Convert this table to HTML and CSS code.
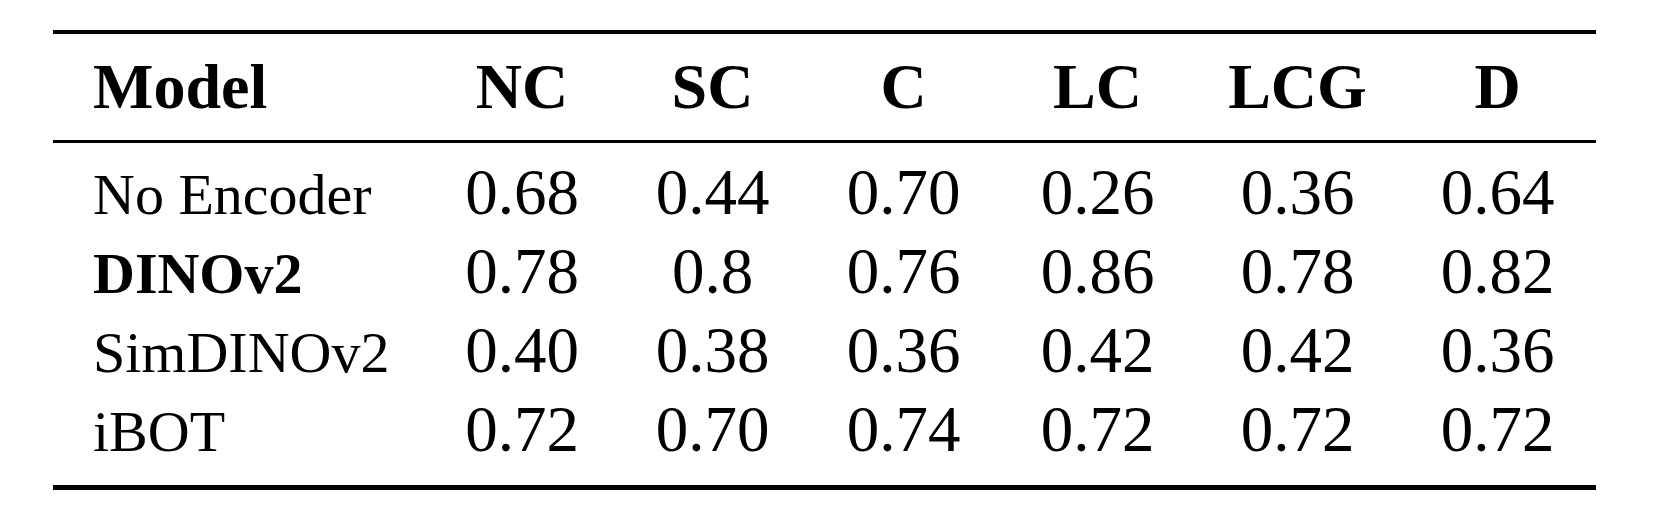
FILE: index.html
```html
<!DOCTYPE html>
<html lang="en">
<head>
<meta charset="utf-8">
<title>Model comparison</title>
<link rel="stylesheet" href="styles.css">
</head>
<body>
<table class="results">
  <colgroup>
    <col class="c-model">
    <col class="c-nc">
    <col class="c-sc">
    <col class="c-c">
    <col class="c-lc">
    <col class="c-lcg">
    <col class="c-d">
  </colgroup>
  <thead>
    <tr>
      <th class="label">Model</th>
      <th>NC</th>
      <th>SC</th>
      <th>C</th>
      <th>LC</th>
      <th>LCG</th>
      <th>D</th>
    </tr>
  </thead>
  <tbody>
    <tr class="first">
      <td class="label">No Encoder</td>
      <td>0.68</td><td>0.44</td><td>0.70</td><td>0.26</td><td>0.36</td><td>0.64</td>
    </tr>
    <tr>
      <td class="label strong">DINOv2</td>
      <td>0.78</td><td>0.8</td><td>0.76</td><td>0.86</td><td>0.78</td><td>0.82</td>
    </tr>
    <tr>
      <td class="label">SimDINOv2</td>
      <td>0.40</td><td>0.38</td><td>0.36</td><td>0.42</td><td>0.42</td><td>0.36</td>
    </tr>
    <tr class="last">
      <td class="label">iBOT</td>
      <td>0.72</td><td>0.70</td><td>0.74</td><td>0.72</td><td>0.72</td><td>0.72</td>
    </tr>
  </tbody>
</table>
</body>
</html>
```
FILE: styles.css
```css
html, body {
  margin: 0;
  padding: 0;
  background: #ffffff;
}

body {
  padding: 30px 0 0 53px;
  font-family: "Liberation Serif", "Times New Roman", serif;
  color: #000000;
}

.results {
  border-collapse: separate;
  border-spacing: 0;
  width: 1543px;
  table-layout: fixed;
}

.c-model { width: 374px; }
.c-nc { width: 190px; }
.c-sc { width: 191px; }
.c-c { width: 191px; }
.c-lc { width: 197px; }
.c-lcg { width: 203px; }
.c-d { width: 197px; }

.results th,
.results td {
  padding: 0;
  text-align: center;
  white-space: nowrap;
  vertical-align: baseline;
}

.results th {
  font-size: 64px;
  line-height: 78px;
  font-weight: bold;
  border-top: 4px solid #000;
  border-bottom: 3px solid #000;
  padding-top: 14px;
  padding-bottom: 14px;
}

.results td {
  font-size: 65px;
  line-height: 74px;
  font-weight: normal;
}

.results .label {
  text-align: left;
  padding-left: 40px;
}

.results td.label {
  font-size: 58px;
  line-height: 78px;
}

.results .strong {
  font-weight: bold;
}

.results tr.first td {
  padding-top: 12px;
}

.results tr.last td {
  padding-bottom: 14px;
  border-bottom: 5px solid #000;
}
```
